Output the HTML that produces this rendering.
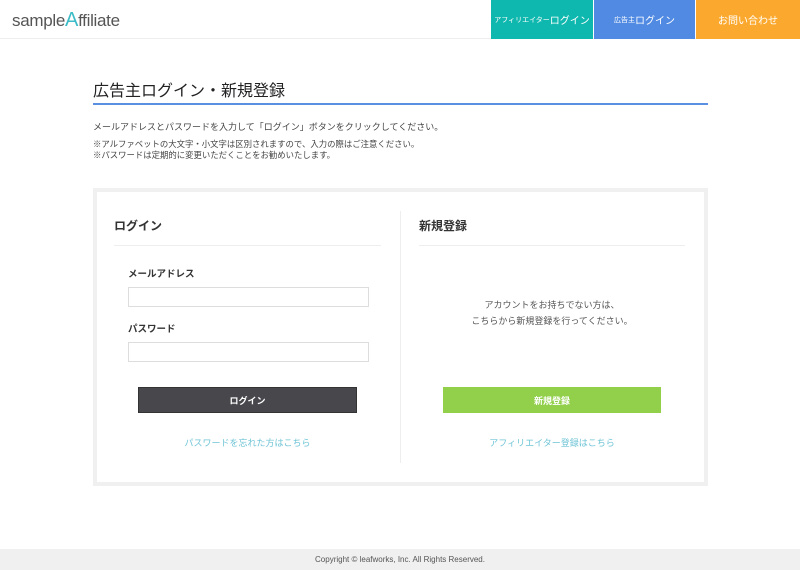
<!DOCTYPE html>
<html><head><meta charset="utf-8"><style>
*{margin:0;padding:0;box-sizing:border-box}
body{width:800px;height:570px;background:#fff;font-family:"Liberation Sans","Noto Sans CJK JP",sans-serif;color:#333;position:relative;overflow:hidden}
.hdr{position:absolute;left:0;top:0;width:800px;height:39px;border-bottom:1px solid #eee}
.logo{position:absolute;left:12px;top:9px;font-size:17px;color:#555;letter-spacing:-0.3px}
.logo span{color:#3cbcc7;font-size:20px}
.nav{position:absolute;top:0;height:39px;color:#fff;font-size:10px;display:flex;align-items:center;justify-content:center;white-space:nowrap}
.a{position:absolute;white-space:nowrap}
h1{position:absolute;left:93px;top:77px;font-size:16px;font-weight:normal;color:#222;white-space:nowrap}
.line{position:absolute;left:93px;top:103px;width:615px;height:2px;background:#5b8fe0}
.t{position:absolute;font-size:9px;color:#444;white-space:nowrap}
.box{position:absolute;left:93px;top:188px;width:615px;height:298px;border:4px solid #f0f0f0}
.inp{position:absolute;left:128px;width:241px;height:20px;border:1px solid #ddd}
.btn{position:absolute;top:387px;height:26px;color:#fff;font-size:9px;font-weight:bold;display:flex;align-items:center;justify-content:center}
.lnk{position:absolute;top:436px;font-size:9px;color:#6fc4d6;text-align:center}
</style></head><body>
<div class="hdr"></div>
<div class="logo">sample<span>A</span>ffiliate</div>
<div class="nav" style="left:491px;width:102px;background:#0fb8ae;font-size:7px">アフィリエイター<span style="font-size:10px">ログイン</span></div>
<div class="nav" style="left:594px;width:101px;background:#508ae2;font-size:7px">広告主<span style="font-size:10px">ログイン</span></div>
<div class="nav" style="left:696px;width:104px;background:#fba92e;font-size:10px">お問い合わせ</div>
<h1>広告主ログイン・新規登録</h1>
<div class="line"></div>
<div class="t" style="left:93px;top:120px">メールアドレスとパスワードを入力して「ログイン」ボタンをクリックしてください。</div>
<div class="t" style="left:93px;top:138px;font-size:8.4px">※アルファベットの大文字・小文字は区別されますので、入力の際はご注意ください。</div>
<div class="t" style="left:93px;top:149px;font-size:8.4px">※パスワードは定期的に変更いただくことをお勧めいたします。</div>
<div class="box"></div>
<div class="a" style="left:114px;top:217px;font-size:12px;font-weight:bold">ログイン</div>
<div class="a" style="left:114px;top:245px;width:267px;height:1px;background:#eee"></div>
<div class="a" style="left:400px;top:211px;width:1px;height:252px;background:#eee"></div>
<div class="a" style="left:419px;top:217px;font-size:12px;font-weight:bold">新規登録</div>
<div class="a" style="left:419px;top:245px;width:266px;height:1px;background:#eee"></div>
<div class="a" style="left:128px;top:266px;font-size:9.5px;font-weight:bold">メールアドレス</div>
<div class="inp" style="top:287px"></div>
<div class="a" style="left:128px;top:321px;font-size:9.5px;font-weight:bold">パスワード</div>
<div class="inp" style="top:342px"></div>
<div class="btn" style="left:138px;width:219px;background:#48474c;border:1px solid #333">ログイン</div>
<div class="btn" style="left:443px;width:218px;background:#92d04c">新規登録</div>
<div class="a" style="left:419px;width:266px;top:297px;font-size:9px;color:#555;text-align:center;line-height:16px">アカウントをお持ちでない方は、<br>こちらから新規登録を行ってください。</div>
<div class="lnk" style="left:138px;width:219px">パスワードを忘れた方はこちら</div>
<div class="lnk" style="left:443px;width:218px">アフィリエイター登録はこちら</div>
<div class="a" style="left:0;top:549px;width:800px;height:21px;background:#f0f0f0;font-size:8px;color:#555;text-align:center;line-height:21px">Copyright © leafworks, Inc. All Rights Reserved.</div>
</body></html>
